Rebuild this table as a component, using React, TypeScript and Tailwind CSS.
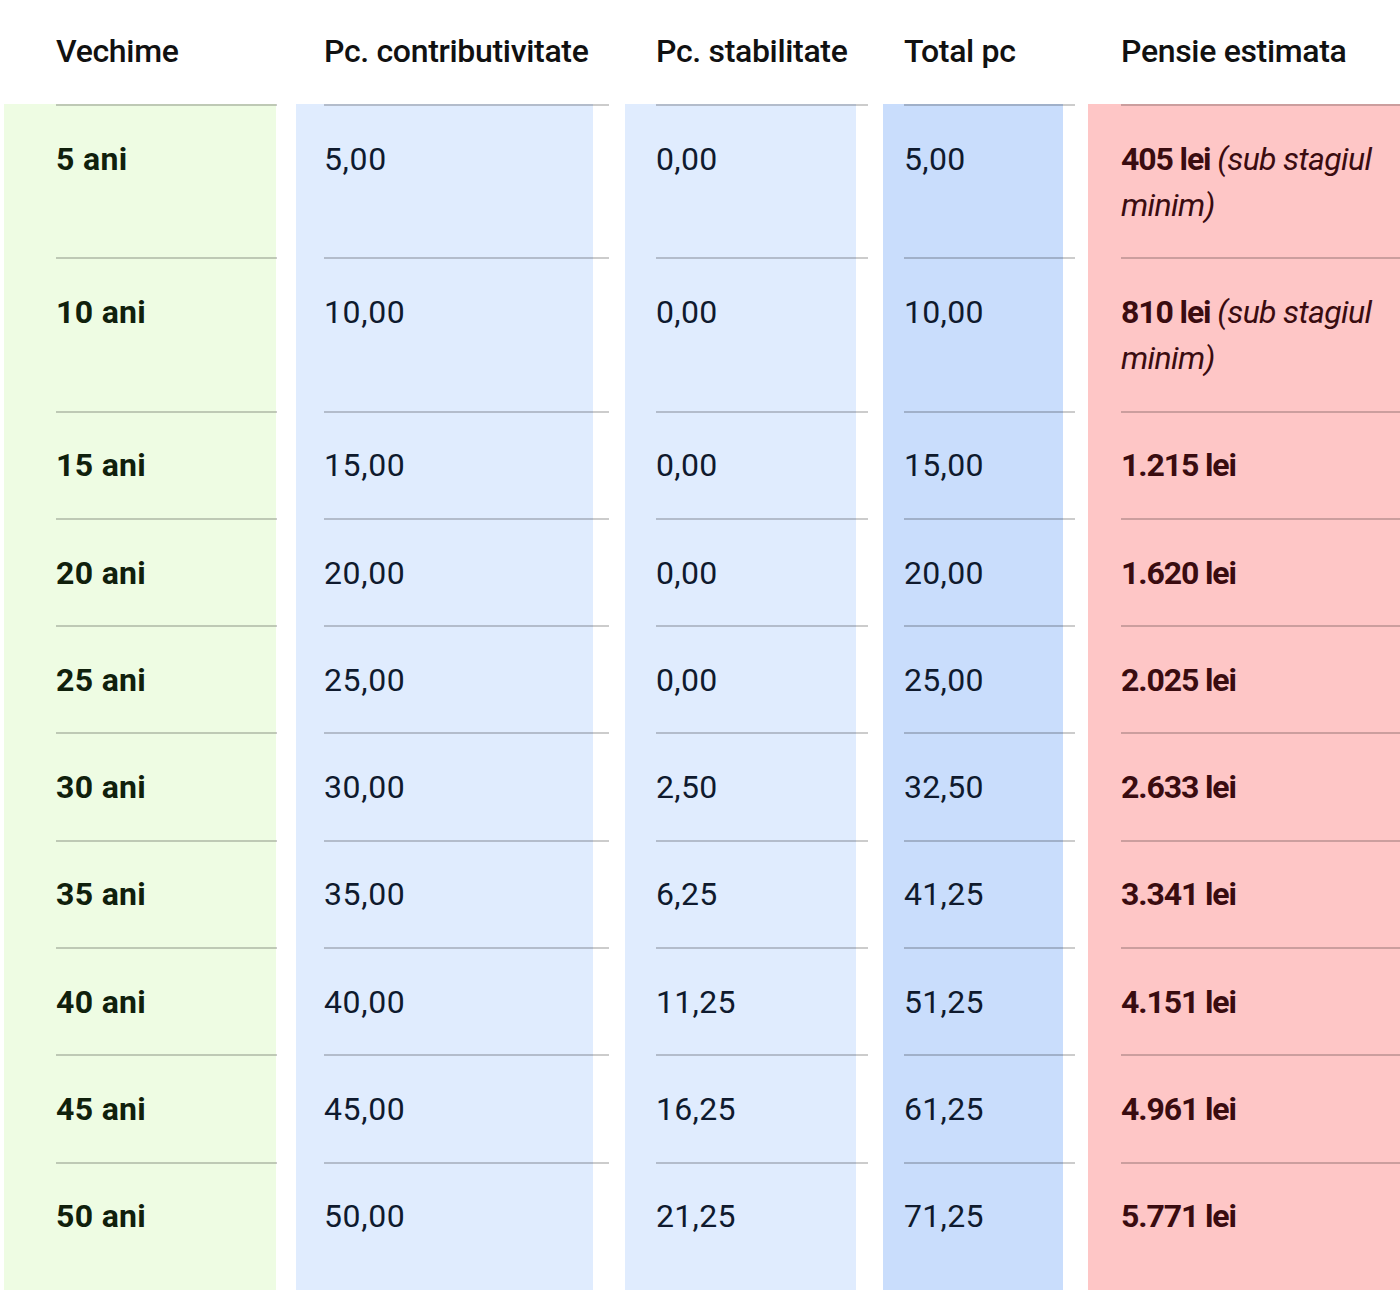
type Col = {
  header: string;
  wrap: string;
  pad: string;
  line: string;
  bg: string;
  text: string;
  values: React.ReactNode[];
};

const years = [5, 10, 15, 20, 25, 30, 35, 40, 45, 50];
const contrib = ['5,00', '10,00', '15,00', '20,00', '25,00', '30,00', '35,00', '40,00', '45,00', '50,00'];
const stab = ['0,00', '0,00', '0,00', '0,00', '0,00', '2,50', '6,25', '11,25', '16,25', '21,25'];
const total = ['5,00', '10,00', '15,00', '20,00', '25,00', '32,50', '41,25', '51,25', '61,25', '71,25'];
const pensie = ['405 lei', '810 lei', '1.215 lei', '1.620 lei', '2.025 lei', '2.633 lei', '3.341 lei', '4.151 lei', '4.961 lei', '5.771 lei'];

const cols: Col[] = [
  {
    header: 'Vechime',
    wrap: 'ml-[4px] w-[272px]',
    pad: 'pl-[52px]',
    line: 'w-[221px]',
    bg: 'bg-[#eefce3]',
    text: 'font-bold text-[#10200c] tracking-[0.01em]',
    values: years.map((y) => `${y} ani`),
  },
  {
    header: 'Pc. contributivitate',
    wrap: 'ml-[20px] w-[297px]',
    pad: 'pl-[28px]',
    line: 'w-[285px]',
    bg: 'bg-[#e0ecfe]',
    text: 'text-[#0f1a2e] tracking-[0.02em]',
    values: contrib,
  },
  {
    header: 'Pc. stabilitate',
    wrap: 'ml-[32px] w-[231px]',
    pad: 'pl-[31px]',
    line: 'w-[212px]',
    bg: 'bg-[#e0ecfe]',
    text: 'text-[#0f1a2e] tracking-[0.01em]',
    values: stab,
  },
  {
    header: 'Total pc',
    wrap: 'ml-[27px] w-[180px]',
    pad: 'pl-[21px]',
    line: 'w-[171px]',
    bg: 'bg-[#c9ddfc]',
    text: 'text-[#0f1a2e] tracking-[0.01em]',
    values: total,
  },
  {
    header: 'Pensie estimata',
    wrap: 'ml-[25px] w-[312px]',
    pad: 'pl-[33px]',
    line: 'w-[279px]',
    bg: 'bg-[#fec6c6]',
    text: 'font-bold text-[#3a0c10] tracking-[-0.035em]',
    values: pensie.map((p, i) =>
      i < 2 ? (
        <>
          {p} <span className="font-normal italic tracking-[-0.02em]">(sub stagiul</span>{' '}
          <span className="font-normal italic tracking-[-0.02em]">minim)</span>
        </>
      ) : (
        p
      )
    ),
  },
];

export default function App() {
  return (
    <div className="flex h-[1290px] overflow-hidden bg-white font-['Roboto',sans-serif] text-[32px]">
      {cols.map((col) => (
        <div key={col.header} className={`flex shrink-0 flex-col ${col.wrap}`}>
          {/* header */}
          <div className={`h-[104px] pt-[28px] ${col.pad}`}>
            <div className="font-medium leading-[46px] tracking-[-0.01em] text-[#111111] whitespace-nowrap">
              {col.header}
            </div>
          </div>
          <div className={`flex-1 ${col.bg} ${col.pad}`}>
            {col.values.map((v, i) => (
              <div
                key={i}
                className={`border-t-2 border-black/20 pt-[29.65px] leading-[46px] ${
                  i < 2 ? 'h-[153.3px]' : 'h-[107.3px]'
                } ${col.line} ${col.text}`}
              >
                {v}
              </div>
            ))}
          </div>
        </div>
      ))}
    </div>
  );
}
